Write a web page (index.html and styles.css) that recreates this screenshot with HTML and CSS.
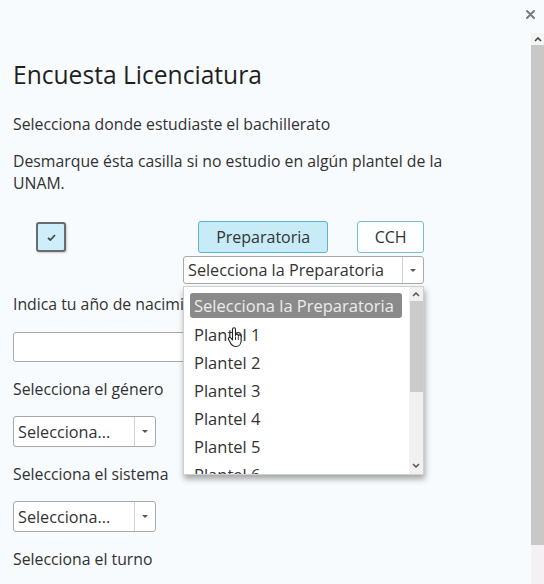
FILE: index.html
```html
<!DOCTYPE html>
<html lang="es">
<head>
<meta charset="utf-8">
<title>Encuesta Licenciatura</title>
<link rel="stylesheet" href="styles.css">
</head>
<body>
<div class="window">
  <button class="close" aria-label="Cerrar">
    <svg width="9" height="9" viewBox="0 0 9 9"><path d="M1 1L8 8M8 1L1 8" stroke="#7a7a7a" stroke-width="2" stroke-linecap="round"/></svg>
  </button>
  <main class="content">
    <h1 class="title">Encuesta Licenciatura</h1>
    <p class="lead">Selecciona donde estudiaste el bachillerato</p>
    <p class="note">Desmarque ésta casilla si no estudio en algún plantel de la UNAM.</p>

    <div class="school-row">
      <span class="check">
        <svg width="9" height="7" viewBox="0 0 9 7"><path d="M1 3.8L3.3 6L8 1" fill="none" stroke="#3f4a52" stroke-width="1.8"/></svg>
      </span>
      <div class="school">
        <div class="tabs">
          <button class="tab tab-active">Preparatoria</button>
          <button class="tab tab-cch">CCH</button>
        </div>
        <div class="select-wrap">
          <div class="select select-wide">
            <span class="select-text">Selecciona la Preparatoria</span>
            <span class="select-arrow"><span class="caret"></span></span>
          </div>
          <div class="dropdown">
            <ul class="dd-list">
              <li class="dd-item dd-selected">Selecciona la Preparatoria</li>
              <li class="dd-item">Plantel 1</li>
              <li class="dd-item">Plantel 2</li>
              <li class="dd-item">Plantel 3</li>
              <li class="dd-item">Plantel 4</li>
              <li class="dd-item">Plantel 5</li>
              <li class="dd-item">Plantel 6</li>
            </ul>
            <div class="dd-scroll">
              <svg class="dd-chev" width="8" height="5" viewBox="0 0 8 5"><path d="M1 4L4 1L7 4" fill="none" stroke="#555" stroke-width="1.5"/></svg>
              <div class="dd-thumb"></div>
              <div class="dd-track"></div>
              <svg class="dd-chev" width="8" height="5" viewBox="0 0 8 5"><path d="M1 1L4 4L7 1" fill="none" stroke="#555" stroke-width="1.5"/></svg>
            </div>
            <svg class="cursor" width="17" height="21" viewBox="0 0 17 21"><path d="M5.5 2.2a1.5 1.5 0 0 1 3 0V8.5a1.4 1.4 0 0 1 2.8 0v.8a1.4 1.4 0 0 1 2.8 0V14c0 3.2-2.2 5.5-5.2 5.5H8.2c-2 0-3.2-1-4.2-2.6L1.6 12.6a1.4 1.4 0 0 1 2.3-1.6L5.5 13Z" fill="#fff" stroke="#222" stroke-width="1.1" stroke-linejoin="round"/><path d="M8.5 9.5V13M11.3 10V13" stroke="#222" stroke-width="0.9"/></svg>
          </div>
        </div>
      </div>
    </div>

    <p class="field-label first clipped">Indica tu año de nacimiento</p>
    <input class="text-input" type="text">

    <p class="field-label">Selecciona el género</p>
    <div class="select select-small">
      <span class="select-text">Selecciona...</span>
      <span class="select-arrow"><span class="caret"></span></span>
    </div>

    <p class="field-label">Selecciona el sistema</p>
    <div class="select select-small">
      <span class="select-text">Selecciona...</span>
      <span class="select-arrow"><span class="caret"></span></span>
    </div>

    <p class="field-label">Selecciona el turno</p>
  </main>
  <div class="scrollbar">
    <div class="sb-up">
      <svg width="8" height="5" viewBox="0 0 8 5"><path d="M1 4L4 1L7 4" fill="none" stroke="#444" stroke-width="1.6"/></svg>
    </div>
    <div class="sb-thumb"></div>
    <div class="sb-track"></div>
  </div>
</div>
</body>
</html>
```

FILE: styles.css
```css
* { box-sizing: border-box; }

html, body {
  margin: 0;
  height: 100%;
}

body {
  background: #f8fbfd;
  font-family: "Open Sans", "Noto Sans", sans-serif;
  color: #313131;
  overflow: hidden;
}

.window {
  position: relative;
  display: flex;
  height: 584px;
  width: 544px;
}

.close {
  position: absolute;
  top: 9px;
  right: 8px;
  width: 11px;
  height: 11px;
  padding: 1px;
  border: 0;
  background: transparent;
  display: flex;
  align-items: center;
  justify-content: center;
}

.content {
  flex: 1;
  padding: 60px 0 0 13px;
}

.title {
  margin: 0;
  font-size: 24.6px;
  font-weight: 400;
  line-height: 30px;
  color: #1f1f1f;
}

.lead, .note, .field-label {
  margin: 0;
  font-size: 15.8px;
  line-height: 22px;
}

.lead { margin-top: 23px; }
.note { margin-top: 15px; width: 460px; }

.school-row {
  display: flex;
  align-items: flex-start;
  margin-top: 27px;
}

.check {
  margin: 1px 0 0 23px;
  width: 30px;
  height: 30px;
  border: 2px solid #6b6b6b;
  border-radius: 3px;
  background: #cdeefa;
  box-shadow: 1px 1px 2px rgba(0,0,0,.2);
  display: flex;
  align-items: center;
  justify-content: center;
}

.school {
  margin-left: 117px;
  width: 241px;
}

.tabs {
  display: flex;
  gap: 29px;
  padding-left: 15px;
}

.tab {
  height: 32px;
  border: 1px solid #5fb2d2;
  border-radius: 3px;
  font-family: inherit;
  font-size: 16px;
  color: #333;
  padding: 0;
}

.tab-active {
  width: 131px;
  background: #c8ebf8;
}

.tab-cch {
  width: 67px;
  background: #fcfeff;
  border-color: #78bcd8;
}

.select-wrap {
  position: relative;
  margin-top: 3px;
}

.select {
  display: flex;
  background: #fff;
  border: 1px solid #a9a9a9;
  border-radius: 3px;
  font-size: 16px;
  color: #333;
}

.select-wide {
  height: 28px;
  width: 241px;
}

.select-small {
  margin-top: 16px;
  height: 31px;
  width: 143px;
}

.select-text {
  flex: 1;
  padding-left: 4px;
  display: flex;
  align-items: center;
  white-space: nowrap;
  overflow: hidden;
  font-size: 16.2px;
}

.select-arrow {
  width: 21px;
  border-left: 1px solid #d2d2d2;
  display: flex;
  align-items: center;
  justify-content: center;
}

.caret {
  width: 0;
  height: 0;
  border-left: 3px solid transparent;
  border-right: 3px solid transparent;
  border-top: 3px solid #555;
}

.dropdown {
  position: absolute;
  top: 30px;
  left: 0;
  width: 241px;
  height: 189px;
  display: flex;
  background: #fff;
  border: 1px solid #cfcfcf;
  box-shadow: 1px 4px 6px rgba(0,0,0,.35);
  z-index: 5;
}

.dd-list {
  flex: 1;
  margin: 0;
  padding: 6px 7px 0 6px;
  list-style: none;
  overflow: hidden;
}

.dd-item {
  height: 28px;
  line-height: 28px;
  padding-left: 4px;
  font-size: 16.5px;
  color: #333;
  white-space: nowrap;
}

.dd-selected {
  height: 25px;
  line-height: 25px;
  margin-bottom: 3px;
  background: #8a8a8a;
  border-radius: 3px;
  color: #ececec;
}

.dd-scroll {
  width: 14px;
  background: #f1f1f1;
  display: flex;
  flex-direction: column;
  align-items: center;
  padding: 5px 0 6px;
}

.dd-chev { flex: none; }

.dd-thumb {
  margin-top: 4px;
  width: 13px;
  height: 91px;
  background: #cbcbcb;
}

.dd-track { flex: 1; }

.cursor {
  position: absolute;
  left: 43px;
  top: 40px;
}

.field-label.first { margin-top: 9px; }
.field-label { margin-top: 16px; }

.clipped {
  width: 170px;
  white-space: nowrap;
  overflow: hidden;
}

.text-input {
  display: block;
  margin: 17px 0 0;
  width: 300px;
  height: 30px;
  border: 1px solid #a9a9a9;
  border-radius: 3px;
  background: #fff;
}

.scrollbar {
  width: 13px;
  margin-top: 33px;
  display: flex;
  flex-direction: column;
}

.sb-up {
  height: 12px;
  background: #f3f3f3;
  display: flex;
  align-items: center;
  justify-content: center;
}

.sb-thumb {
  height: 500px;
  background: #c8c8c8;
}

.sb-track {
  flex: 1;
  background: #f4f1f4;
}
```
